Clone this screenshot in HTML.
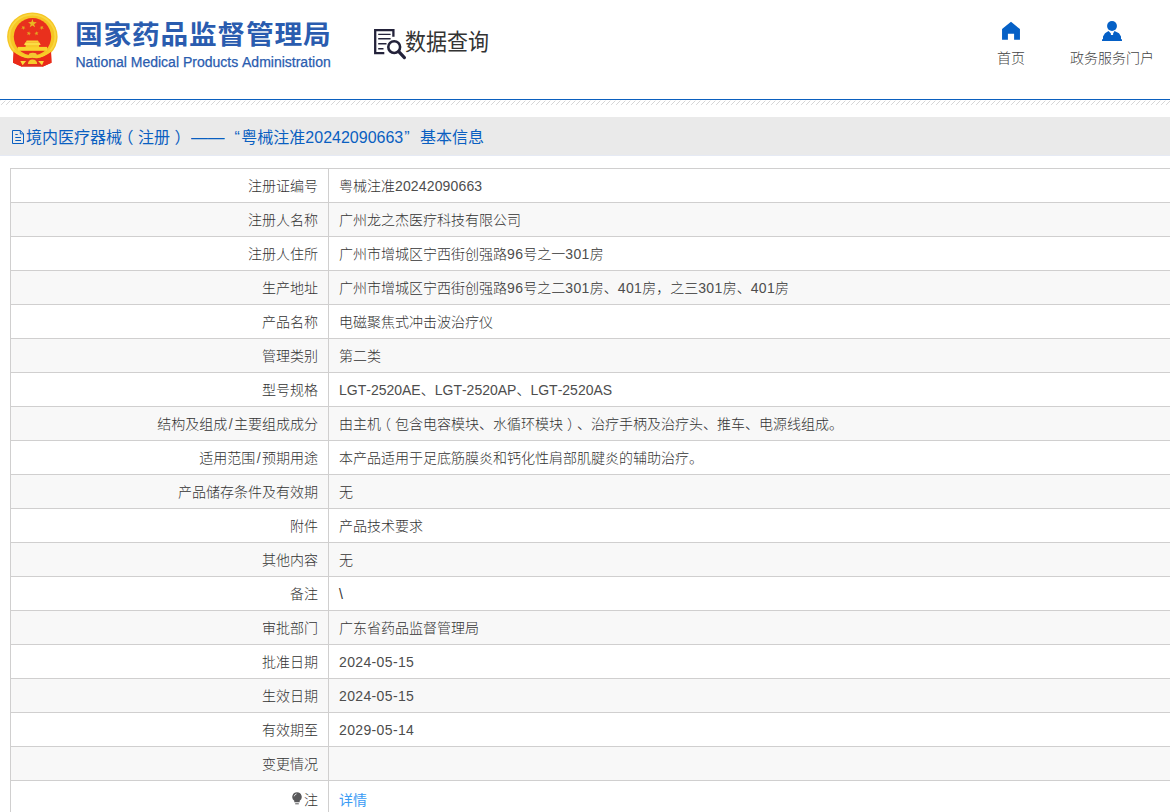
<!DOCTYPE html>
<html lang="zh-CN">
<head>
<meta charset="utf-8">
<title>国家药品监督管理局 数据查询</title>
<style>
*{box-sizing:border-box;margin:0;padding:0}
html,body{width:1170px;height:812px;overflow:hidden;background:#fff}
body{font-family:"Liberation Sans","Noto Sans CJK SC",sans-serif;font-size:14px;color:#333;position:relative;text-spacing-trim:space-all;font-kerning:none}
a{text-decoration:none;color:inherit}
.page{position:absolute;left:0;top:0;width:1220px;height:812px;overflow:hidden}
/* header */
.header{position:absolute;left:0;top:0;width:1220px;height:99px;background:#fff}
.emblem{position:absolute;left:0;top:0;width:70px;height:80px}
.logo-cn{position:absolute;left:74.7px;top:14.5px;height:40px;line-height:40px;font-family:"Liberation Sans","Noto Sans CJK SC",sans-serif;font-weight:700;font-size:26.5px;letter-spacing:0.77px;color:#2a5caf;white-space:nowrap;transform:scale(1.045,0.985);transform-origin:0 50%}
.logo-en{position:absolute;left:75.5px;top:52.5px;-webkit-text-stroke:0.25px #2a5caf;height:18px;line-height:18px;font-family:"Liberation Sans",sans-serif;font-size:14px;color:#2a5caf;white-space:nowrap}
.sj-icon{position:absolute;left:372px;top:27px;width:36px;height:34px}
.sj-text{position:absolute;left:405px;top:25.5px;height:32px;line-height:32px;font-size:21px;color:#333;white-space:nowrap;transform:scaleY(1.1);transform-origin:0 50%;font-family:"Liberation Sans","Noto Sans CJK SC",sans-serif}
.nav{position:absolute;top:0;height:99px;text-align:center;color:#444;font-size:14px;font-weight:300}
.nav svg{position:absolute;top:20px}
.nav span{position:absolute;left:0;right:0;top:48px;height:20px;line-height:20px;white-space:nowrap}
.nav.home{left:981px;width:60px}
.nav.gov{left:1062px;width:100px}
.rule{position:absolute;left:0;top:99px;width:1220px;height:1px;background:#0b60bf}
.hatch{position:absolute;left:0;top:100px;width:1220px;height:5px}
/* title bar */
.tbar{position:absolute;left:0;top:117px;width:1220px;height:39px;background:#eaeaea;border-bottom:1px solid #e6eaf4;color:#0a5fc1;font-size:16px;line-height:39px;white-space:nowrap}
.tbar svg{position:absolute;left:12px;top:13px}
.tbar .t{position:absolute;top:0;height:39px;line-height:42px}
/* table */
table{position:absolute;left:10px;top:168px;width:1200px;border-collapse:collapse;table-layout:fixed}
td{height:34px;border:1px solid #d0cfcf;font-size:14px;line-height:20px;padding:0 10px;vertical-align:middle;white-space:nowrap;color:#333;font-weight:300}
td.k{width:318px;text-align:right}
td.v{text-align:left}
tr:nth-child(even) td{background:#f8f8f8}
.lnk{color:#3a9cf5;font-weight:400}
.bulb{display:inline-block;vertical-align:-0.5px;margin-right:2px}
i.pl,i.pr{font-style:normal;position:relative}
i.pl{left:-0.28em}
i.pr{left:0.28em}
.d{letter-spacing:0.36px;color:#4d4d4d}
.d.l{letter-spacing:0}
.sl{padding:0 1.4px;color:#4d4d4d}
</style>
</head>
<body>
<div class="page">
  <div class="header">
    <svg class="emblem" viewBox="0 0 70 80">
      <ellipse cx="32.350" cy="36.700" rx="25.250" ry="24.200" fill="#f6c624"/>
      <ellipse cx="32.350" cy="36.700" rx="23" ry="22" fill="none" stroke="#fbe052" stroke-width="1.800" opacity="0.650"/>
      <circle cx="32.500" cy="36.800" r="18.700" fill="#e9301d"/>
      <path d="M13.700 51.600 Q21 57.200 27.500 58 Q30.500 58.200 32.300 57.300 Q34.100 58.200 37.100 58 Q43.600 57.200 51 51.600 L51.500 62.700 L42.500 66.700 L22 66.700 L13 62.700 Z" fill="#e2301c"/>
      <path d="M13.700 52 L13 62.700 L22 66.700 L24.500 58.500 Z M51 52 L51.500 62.700 L42.500 66.700 L40 58.500 Z" fill="#ea2a18"/>
      <path d="M14.300 49.500 Q21 55 27.500 55.600 Q30.500 55.600 32.300 54.800 Q34.100 55.600 37.100 55.600 Q43.600 55 50.400 49.500 L51.300 51.800 Q43.600 57.600 37.100 58.300 Q34.100 58.500 32.300 57.500 Q30.500 58.500 27.500 58.300 Q21 57.600 13.400 51.800 Z" fill="#f8cc28"/>
      <ellipse cx="32.800" cy="55.200" rx="4.100" ry="2.400" fill="#f4c631"/>
      <path d="M20.300 60.900 L26.100 60.900 L22.600 65.300 Z M38.100 60.900 L43.900 60.900 L42 65.300 Z" fill="#f9dc3a"/>
      <path d="M27.900 64 Q28.200 59.400 32.500 59.400 Q36.900 59.400 37.200 64 Z" fill="#f7cb2c"/>
      <rect x="17.800" y="46.900" width="29.200" height="3.900" fill="#f9d42f"/>
      <rect x="25.600" y="44.600" width="13.500" height="2.600" fill="#f7c92a"/>
      <path d="M24 44.900 L25.200 42.600 L39.500 42.600 L40.700 44.900 Z" fill="#fbdc45"/>
      <path d="M25.500 42.700 L26.700 40.600 L38 40.600 L39.200 42.700 Z" fill="#f9d235"/>
      <polygon points="32.40,19.00 33.48,22.11 36.77,22.18 34.15,24.17 35.10,27.32 32.40,25.44 29.70,27.32 30.65,24.17 28.03,22.18 31.32,22.11" fill="#e9b722"/>
      <polygon points="24.45,25.71 24.14,27.33 25.55,28.18 23.92,28.38 23.54,29.99 22.84,28.50 21.20,28.64 22.40,27.51 21.76,25.99 23.20,26.79" fill="#e3a922"/>
      <polygon points="40.65,25.71 41.90,26.79 43.34,25.99 42.70,27.51 43.90,28.64 42.26,28.50 41.56,29.99 41.18,28.38 39.55,28.18 40.96,27.33" fill="#e3a922"/>
      <polygon points="29.20,31.13 29.46,32.76 31.08,33.08 29.61,33.83 29.81,35.47 28.64,34.31 27.15,35.00 27.89,33.53 26.77,32.32 28.40,32.57" fill="#e3a922"/>
      <polygon points="36.10,31.13 36.90,32.57 38.53,32.32 37.41,33.53 38.15,35.00 36.66,34.31 35.49,35.47 35.69,33.83 34.22,33.08 35.84,32.76" fill="#e3a922"/>
    </svg>
    <div class="logo-cn">国家药品监督管理局</div>
    <div class="logo-en">National Medical Products Administration</div>

    <svg class="sj-icon" viewBox="0 0 36 34" fill="none" stroke="#23223a" stroke-linecap="butt">
      <path d="M21.400 9.800 V3.200 H3.200 V26.200 H12.300" stroke-width="2.300"/>
      <path d="M6.200 7.400 H18.600 M6.200 11.800 H18.600 M6.200 16.700 H14.500 M6.200 21.800 H11.500" stroke-width="1.400"/>
      <circle cx="22.200" cy="20.100" r="5.900" stroke-width="2.600"/>
      <path d="M26.800 24.700 L32.400 30.600" stroke-width="3.200" stroke-linecap="round"/>
    </svg>
    <div class="sj-text">数据查询</div>

    <a class="nav home">
      <svg style="left:20px" width="20" height="20" viewBox="0 0 20 20"><path d="M10 1.800 L18.950 9.100 V19.850 H13.100 V13.800 H6.900 V19.850 H1.050 V9.100 Z" fill="#0560c6"/></svg>
      <span>首页</span>
    </a>
    <a class="nav gov">
      <svg style="left:39px" width="22" height="21" viewBox="0 0 22 21"><circle cx="11" cy="5.950" r="4.950" fill="#0560c6"/><path d="M1 21 V19.200 H2 V16.500 L4 13.300 L7.500 10.900 L9.900 13.500 V15.100 H12.100 V13.500 L13.500 10.900 L18 13.300 L20 16.500 V19.200 H21 V21 Z" fill="#0560c6"/></svg>
      <span>政务服务门户</span>
    </a>
  </div>
  <div class="rule"></div>
  <svg class="hatch" width="1220" height="5" shape-rendering="crispEdges">
    <defs><pattern id="h" width="5" height="5" patternUnits="userSpaceOnUse"><rect x="0" y="0" width="1" height="1" fill="#efefef"/><rect x="4" y="1" width="1" height="1" fill="#d6d6d6"/><rect x="3" y="2" width="1" height="1" fill="#d6d6d6"/><rect x="2" y="3" width="1" height="1" fill="#d6d6d6"/><rect x="1" y="4" width="1" height="1" fill="#dadada"/></pattern></defs>
    <rect width="1220" height="5" fill="url(#h)"/>
  </svg>

  <div class="tbar">
    <svg width="12" height="14" viewBox="0 0 12 14" fill="none" stroke="#0a5fc1" stroke-width="1"><path d="M0.500 0.500 H8.300 L11.500 3.900 V13.500 H0.500 Z"/><path d="M8.300 0.500 V3.900 H11.500"/><path d="M3.300 4.500 H5.700 M3.300 7.500 H9 M3.300 10.500 H9" stroke-width="1.100"/></svg>
    <span class="t" style="left:26px">境内医疗器械<i class="pl">（</i>注册<i class="pr">）</i></span>
    <span class="t" style="left:190.500px;transform:scaleX(1.05);transform-origin:0 50%">——</span>
    <span class="t" style="left:234.500px">“<span style="margin-left:1.500px">粤械注准</span>20242090663<span style="margin-left:1px">”</span></span>
    <span class="t" style="left:420px">基本信息</span>
  </div>

  <table>
    <tr><td class="k">注册证编号</td><td class="v">粤械注准<span class="d" style="letter-spacing:0.150px">20242090663</span></td></tr>
    <tr><td class="k">注册人名称</td><td class="v">广州龙之杰医疗科技有限公司</td></tr>
    <tr><td class="k">注册人住所</td><td class="v">广州市增城区宁西街创强路<span class="d">96</span>号之一<span class="d">301</span>房</td></tr>
    <tr><td class="k">生产地址</td><td class="v">广州市增城区宁西街创强路<span class="d">96</span>号之二<span class="d">301</span>房、<span class="d">401</span>房，之三<span class="d">301</span>房、<span class="d">401</span>房</td></tr>
    <tr><td class="k">产品名称</td><td class="v">电磁聚焦式冲击波治疗仪</td></tr>
    <tr><td class="k">管理类别</td><td class="v">第二类</td></tr>
    <tr><td class="k">型号规格</td><td class="v"><span class="d l">LGT-2520AE</span>、<span class="d l">LGT-2520AP</span>、<span class="d l">LGT-2520AS</span></td></tr>
    <tr><td class="k">结构及组成<span class="sl">/</span>主要组成成分</td><td class="v">由主机<i class="pl">（</i>包含电容模块、水循环模块<i class="pr">）</i>、治疗手柄及治疗头、推车、电源线组成。</td></tr>
    <tr><td class="k">适用范围<span class="sl">/</span>预期用途</td><td class="v">本产品适用于足底筋膜炎和钙化性肩部肌腱炎的辅助治疗。</td></tr>
    <tr><td class="k">产品储存条件及有效期</td><td class="v">无</td></tr>
    <tr><td class="k">附件</td><td class="v">产品技术要求</td></tr>
    <tr><td class="k">其他内容</td><td class="v">无</td></tr>
    <tr><td class="k">备注</td><td class="v">\</td></tr>
    <tr><td class="k">审批部门</td><td class="v">广东省药品监督管理局</td></tr>
    <tr><td class="k">批准日期</td><td class="v"><span class="d">2024-05-15</span></td></tr>
    <tr><td class="k">生效日期</td><td class="v"><span class="d">2024-05-15</span></td></tr>
    <tr><td class="k">有效期至</td><td class="v"><span class="d">2029-05-14</span></td></tr>
    <tr><td class="k">变更情况</td><td class="v"></td></tr>
    <tr><td class="k" style="height:38px"><svg class="bulb" width="10" height="13" viewBox="0 0 10 13"><path d="M5 0.300 A4.700 4.700 0 0 1 7.700 8.850 V10.300 H2.300 V8.850 A4.700 4.700 0 0 1 5 0.300 Z" fill="#58585a"/><path d="M2.200 4.300 A3 3 0 0 1 4.600 1.900" stroke="#fff" stroke-width="0.900" fill="none" opacity="0.850"/><rect x="3.200" y="11.300" width="3.600" height="1" fill="#58585a"/></svg>注</td><td class="v"><a class="lnk">详情</a></td></tr>
  </table>
</div>
</body>
</html>
